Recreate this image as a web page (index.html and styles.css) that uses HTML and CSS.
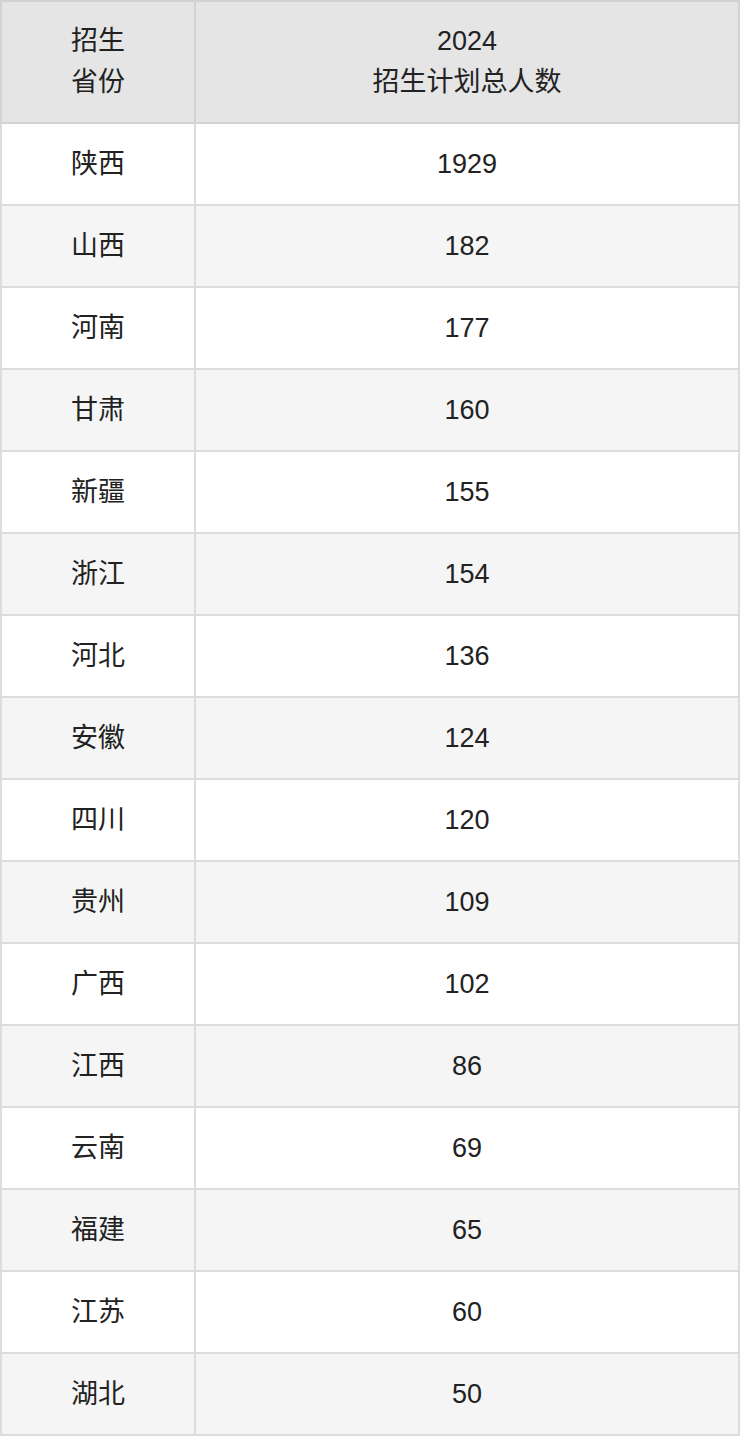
FILE: index.html
```html
<!DOCTYPE html>
<html lang="zh">
<head>
<meta charset="utf-8">
<link rel="stylesheet" href="styles.css">
</head>
<body>
<table class="plan">
  <thead>
    <tr><th class="c1">招生<br>省份</th><th class="c2">2024<br>招生计划总人数</th></tr>
  </thead>
  <tbody>
    <tr><td>陕西</td><td>1929</td></tr>
    <tr><td>山西</td><td>182</td></tr>
    <tr><td>河南</td><td>177</td></tr>
    <tr><td>甘肃</td><td>160</td></tr>
    <tr><td>新疆</td><td>155</td></tr>
    <tr><td>浙江</td><td>154</td></tr>
    <tr><td>河北</td><td>136</td></tr>
    <tr><td>安徽</td><td>124</td></tr>
    <tr><td>四川</td><td>120</td></tr>
    <tr><td>贵州</td><td>109</td></tr>
    <tr><td>广西</td><td>102</td></tr>
    <tr><td>江西</td><td>86</td></tr>
    <tr><td>云南</td><td>69</td></tr>
    <tr><td>福建</td><td>65</td></tr>
    <tr><td>江苏</td><td>60</td></tr>
    <tr><td>湖北</td><td>50</td></tr>
  </tbody>
</table>
</body>
</html>
```

FILE: styles.css
```css
html, body {
  margin: 0;
  padding: 0;
  background: #ffffff;
}
.plan {
  width: 740px;
  border-collapse: collapse;
  font-family: "Liberation Sans", "Noto Sans CJK SC", sans-serif;
  font-size: 27px;
  color: #222222;
  table-layout: fixed;
}
.plan th, .plan td {
  border: 2px solid #dcdcdc;
  text-align: center;
  vertical-align: middle;
  padding: 0;
  font-weight: normal;
}
.plan th {
  background: #e5e5e5;
  height: 120px;
  line-height: 41px;
  border-color: #d2d2d2;
}
.plan .c1 {
  width: 192px;
}
.plan td {
  height: 80px;
  line-height: 30px;
}
.plan tbody tr:nth-child(even) td {
  background: #f5f5f5;
}
```
